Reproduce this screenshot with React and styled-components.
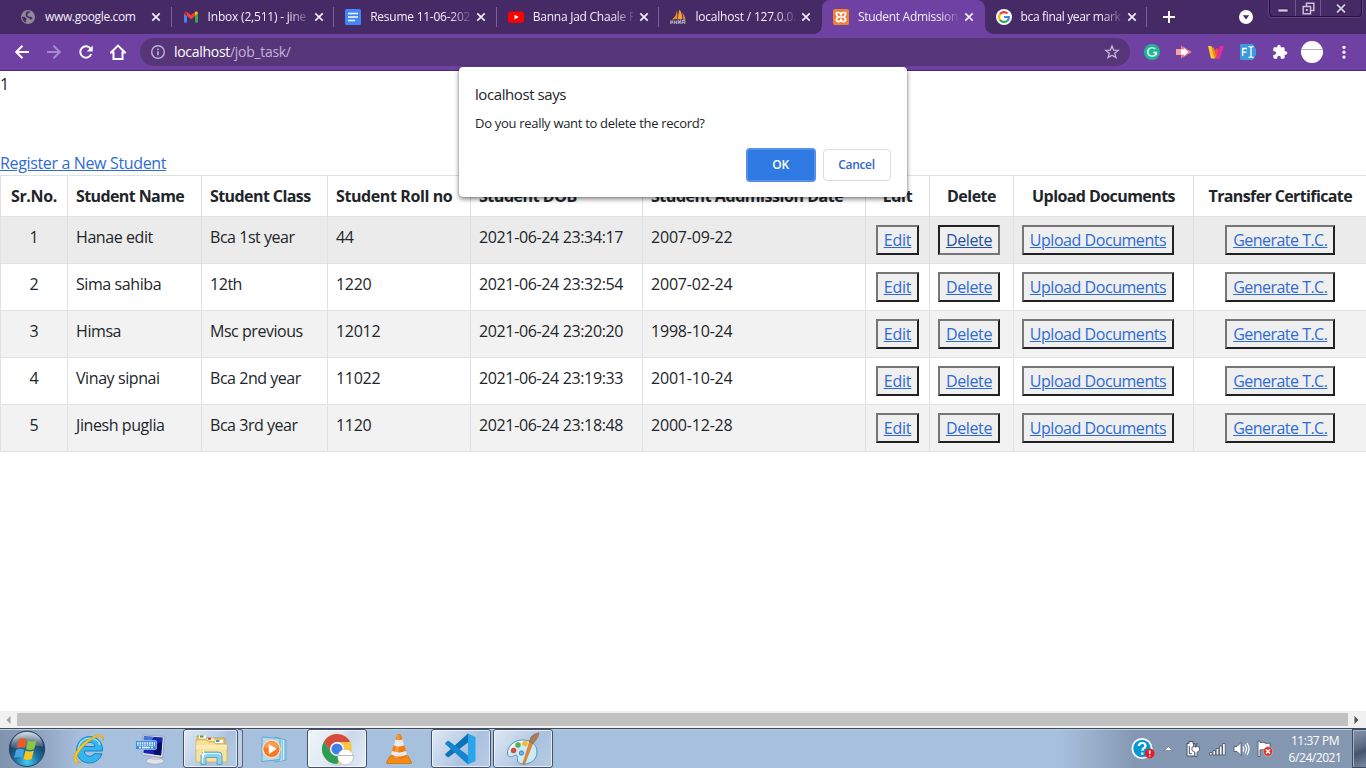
import React from "react";
import styled, { createGlobalStyle, css } from "styled-components";

const Global = createGlobalStyle`
  * { box-sizing: border-box; }
  html, body { margin: 0; padding: 0; overflow: hidden; }
  body { font-family: "Open Sans", "Noto Sans", sans-serif; color: #212529; background: #fff; }
  svg { display: block; flex: none; }
`;

const Screen = styled.div`
  width: 1366px;
  height: 768px;
  position: relative;
  display: flex;
  flex-direction: column;
  overflow: hidden;
`;

/* ---------- browser tabs ---------- */
const TabStrip = styled.header`
  height: 34px;
  flex: none;
  display: flex;
  align-items: stretch;
  padding-left: 9px;
  background: #452a66;
`;
const Tab = styled.div`
  width: 162.6px;
  flex: none;
  display: flex;
  align-items: center;
  padding-left: 11px;
  position: relative;
  color: #f3eff8;
  ${(p) =>
    p.$active
      ? css`
          background: #6e41a2;
          border-radius: 8px 8px 0 0;
          &::before, &::after {
            content: "";
            position: absolute;
            bottom: 0;
            width: 8px;
            height: 8px;
          }
          &::before { left: -8px; background: radial-gradient(circle at 0 0, #452a66 7.5px, #6e41a2 8px); }
          &::after { right: -8px; background: radial-gradient(circle at 100% 0, #452a66 7.5px, #6e41a2 8px); }
        `
      : ""}
`;
const TabTitle = styled.span`
  width: 100px;
  margin-left: 9px;
  font-size: 12px;
  line-height: 20px;
  letter-spacing: ${(p) => p.$ls ?? -0.1}px;
  white-space: nowrap;
  -webkit-mask-image: linear-gradient(90deg, #000 80px, rgba(0, 0, 0, 0.15) 100px);
  mask-image: linear-gradient(90deg, #000 80px, rgba(0, 0, 0, 0.15) 100px);
  ${(p) => p.$whole && "mask-image: none; -webkit-mask-image: none;"}
`;
const TabClose = styled.span`
  margin-left: 6px;
  display: flex;
`;
const TabDivider = styled.i`
  width: 1px;
  height: 20px;
  margin-left: auto;
  background: ${(p) => (p.$hidden ? "transparent" : "#7d5f9d")};
`;
const NewTab = styled.div`
  width: 44px;
  display: flex;
  align-items: center;
  justify-content: center;
`;
const StripEnd = styled.div`
  margin-left: auto;
  display: flex;
  align-items: center;
  gap: 16px;
  padding-right: 4px;
`;
const WindowControls = styled.div`
  align-self: flex-start;
  display: flex;
  height: 17px;
  border: 1px solid #22123a;
  border-top: 0;
  border-radius: 0 0 4px 4px;
  box-shadow: 0 0 0 1px #5c4580;
`;
const WindowButton = styled.div`
  width: ${(p) => p.$w}px;
  display: flex;
  align-items: center;
  justify-content: center;
  & + & { border-left: 1px solid #6d5890; }
`;

/* ---------- browser toolbar ---------- */
const Toolbar = styled.div`
  height: 37px;
  flex: none;
  display: flex;
  align-items: center;
  padding: 0 11px 1px 14px;
  background: #6e41a2;
  border-bottom: 1px solid #4a2c6e;
`;
const NavButtons = styled.div`
  display: flex;
  gap: 16px;
  width: 126px;
`;
const AddressBar = styled.div`
  width: 990px;
  height: 28px;
  flex: none;
  display: flex;
  align-items: center;
  padding: 0 10px;
  border-radius: 14px;
  background: #563679;
  font-size: 14px;
  color: #c3b0da;
`;
const Address = styled.span`
  flex: 1;
  margin-left: 8px;
  line-height: 20px;
  letter-spacing: -0.3px;
  b { font-weight: 400; color: #fff; }
`;
const Extensions = styled.div`
  margin-left: 14px;
  display: flex;
  align-items: center;
  gap: 16px;
`;
const Profile = styled.div`
  width: 22px;
  height: 22px;
  margin: 0 -3px 0 -3px;
  border-radius: 50%;
  background: linear-gradient(#fff 8px, #b9b5be 8px, #b9b5be 9px, #fff 9px);
`;

/* ---------- page ---------- */
const Page = styled.main`
  height: 640px;
  flex: none;
  overflow: hidden;
  font-size: 16px;
  line-height: 24px;
  letter-spacing: -0.35px;
`;
const Output = styled.div`
  height: 80px;
  padding-top: 1px;
`;
const RegisterLink = styled.a`
  display: block;
  height: 24px;
  color: #2e6bd6;
  text-decoration: underline;
`;
const StudentTable = styled.table`
  width: 1366px;
  table-layout: fixed;
  border-collapse: collapse;
`;
const HeadCell = styled.th`
  height: 41px;
  padding: 8px;
  border: 1px solid #dee2e6;
  text-align: ${(p) => (p.$center ? "center" : "left")};
  font-weight: 700;
  white-space: nowrap;
  letter-spacing: ${(p) => p.$ls}px;
  &:last-child { border-right: 0; }
`;
const Row = styled.tr`
  height: 47px;
  background: ${(p) => p.$bg};
`;
const Cell = styled.td`
  padding: 8px;
  border: 1px solid #dee2e6;
  text-align: ${(p) => (p.$center ? "center" : "left")};
  vertical-align: top;
  white-space: nowrap;
  letter-spacing: ${(p) => p.$ls ?? -0.35}px;
  &:last-child { border-right: 0; }
`;
const ActionButton = styled.button`
  display: inline-block;
  vertical-align: top;
  width: ${(p) => p.$w}px;
  height: 30px;
  padding: 0;
  border: 2px solid;
  border-color: ${(p) => (p.$pressed ? "#212121 #767676 #767676 #212121" : "#767676 #212121 #212121 #767676")};
  background: #efefef;
  color: ${(p) => (p.$pressed ? "#1f4fa3" : "#2e6bd6")};
  font: inherit;
  letter-spacing: ${(p) => p.$ls ?? -0.2}px;
  text-decoration: underline;
  white-space: nowrap;
`;

/* ---------- dialog ---------- */
const Dialog = styled.section`
  position: absolute;
  left: 459px;
  top: 67px;
  width: 448px;
  height: 130px;
  padding: 15px 16px 16px;
  display: flex;
  flex-direction: column;
  border-radius: 4px;
  background: #fff;
  box-shadow: 0 0 1px rgba(0, 0, 0, 0.6), 0 2px 5px rgba(0, 0, 0, 0.5);
`;
const DialogTitle = styled.h1`
  margin: 0;
  font-size: 15px;
  line-height: 24px;
  font-weight: 400;
  letter-spacing: -0.42px;
`;
const DialogText = styled.p`
  margin: 7px 0 0;
  font-size: 13px;
  line-height: 20px;
  letter-spacing: -0.3px;
`;
const DialogActions = styled.div`
  margin-top: auto;
  display: flex;
  justify-content: flex-end;
  align-items: center;
  gap: 7px;
  margin-bottom: -1px;
`;
const DialogButton = styled.button`
  width: ${(p) => (p.$primary ? 70 : 68)}px;
  height: ${(p) => (p.$primary ? 34 : 32)}px;
  padding: 0 1px 1px 0;
  border: ${(p) => (p.$primary ? "2px solid #5590ea" : "1px solid #dadce0")};
  border-radius: 4px;
  background: ${(p) => (p.$primary ? "#2f7ae2" : "#fff")};
  color: ${(p) => (p.$primary ? "#fff" : "#3068cb")};
  font: 600 12px "Open Sans", sans-serif;
  letter-spacing: -0.35px;
`;

/* ---------- horizontal scrollbar ---------- */
const ScrollBar = styled.div`
  height: 17px;
  flex: none;
  display: flex;
  align-items: center;
  background: #f1f1f1;
`;
const ScrollArrow = styled.div`
  width: 17px;
  display: flex;
  justify-content: center;
`;
const ScrollThumb = styled.div`
  width: 1331px;
  height: 13px;
  background: #c1c1c1;
`;

/* ---------- taskbar ---------- */
const Taskbar = styled.footer`
  height: 40px;
  flex: none;
  display: flex;
  align-items: stretch;
  border-top: 1px solid #3f4c5f;
  box-shadow: inset 0 1px 0 #bccde2;
  background: linear-gradient(90deg, #7f92ae 0, #8fa4c1 40px, #a7c0de 82px, #a7c0de 1060px, #8598b3 1135px, #8497b1 100%);
`;
const StartSlot = styled.div`
  width: 58px;
  padding: 1px 0 0 8px;
`;
const TaskSlot = styled.div`
  width: 62px;
  padding: 0 1px;
  display: flex;
`;
const TaskButton = styled.div`
  flex: 1;
  display: flex;
  align-items: center;
  justify-content: center;
  ${(p) =>
    p.$open &&
    css`
      border: 1px solid #43526a;
      border-radius: 3px;
      box-shadow: inset 0 0 0 1px rgba(255, 255, 255, 0.65);
      background: ${p.$active
        ? "linear-gradient(115deg, #f1f5fa 0%, #dfe8f3 45%, #c9d8ea 60%, #e6eef6 100%)"
        : "linear-gradient(125deg, #dfe8f4 0%, #bccfe6 45%, #aac1df 60%, #b7cbe4 100%)"};
    `}
`;
const StackEdge = styled.i`
  width: 5px;
  border: 1px solid #56667f;
  border-left: 0;
  border-radius: 0 3px 3px 0;
  background: #bfd0e6;
`;
const Tray = styled.div`
  margin-left: auto;
  display: flex;
  align-items: stretch;
`;
const TrayItem = styled.div`
  width: ${(p) => p.$w}px;
  display: flex;
  align-items: center;
  justify-content: center;
`;
const Clock = styled.div`
  width: 75px;
  padding: 3px 0 0 1px;
  color: #fff;
  font-size: 12px;
  line-height: 17px;
  text-align: center;
  letter-spacing: -0.45px;
  white-space: nowrap;
`;
const ShowDesktop = styled.div`
  width: 14px;
  border: 1px solid #3e4b60;
  border-right: 0;
  box-shadow: inset 1px 1px 0 #a4b2c6;
  background: linear-gradient(160deg, #8594aa 0, #5d6c84 45%, #46556d 60%, #77879f 100%);
`;

/* ---------- icons ---------- */
const Cross = () => (
  <svg width="10" height="10" viewBox="0 0 10 10" stroke="#f3eff8" strokeWidth="1.7"><path d="M1.3 1.3 8.7 8.7M8.7 1.3 1.3 8.7" /></svg>
);
const GlobeIcon = () => (
  <svg width="16" height="16" viewBox="0 0 16 16">
    <circle cx="8" cy="8" r="7" fill="#8f8a95" />
    <path d="M2.200 7.500 4.800 8l2 2-1 1.500.4 2.200C3.500 12.800 2 10.500 2.200 7.500ZM6.500 2.500 10 2.300 9.300 4 7.500 4.800 7.300 6.500l1.800 1.200L11.500 8l1.200 1.500-2.200 1.200L9.300 9.200 6.500 8 5.500 6Z" fill="#452a66" />
  </svg>
);
const GmailIcon = () => (
  <svg width="16" height="16" viewBox="0 0 16 16">
    <path d="M1 13.500h3V7L1 4.500Z" fill="#4285f4" /><path d="M12 13.500h3v-9L12 7Z" fill="#34a853" />
    <path d="M12 7l3-2.400V4c0-1.500-1.700-2-2.700-1.200L12 3Z" fill="#fbbc04" />
    <path d="M1 4.600 4 7V3l-.3-.2C2.700 2 1 2.500 1 4Z" fill="#c5221f" />
    <path d="M4 3 8 6l4-3v4l-4 3.200L4 7Z" fill="#ea4335" />
  </svg>
);
const DocsIcon = () => (
  <svg width="16" height="16" viewBox="0 0 16 16"><rect width="16" height="16" rx="1.600" fill="#4285f4" /><path d="M3 4.500h10M3 8h10M3 11.500h7" stroke="#fff" strokeWidth="1.700" /></svg>
);
const YoutubeIcon = () => (
  <svg width="16" height="16" viewBox="0 0 16 16"><rect y="2.500" width="16" height="11.200" rx="3" fill="#f00" /><path d="m6.500 5.700 4.200 2.400-4.200 2.400Z" fill="#fff" /></svg>
);
const PmaIcon = () => (
  <svg width="16" height="16" viewBox="0 0 16 16">
    <path d="M6.500 1.500c.5 3-.8 6-4.500 9l5-.600c.8-3 .8-6-.5-8.400Z" fill="#f29111" />
    <path d="M9.500.5C8.300 4 8.500 7 7.800 10l4.200.3C12.400 7 11.500 3 9.500.5Z" fill="#f6a033" />
    <path d="M12 3.500c.8 2 1 4.500.7 7l2.800.500C15.300 8 14 5.500 12 3.500Z" fill="#d9853b" />
    <path d="M.7 11.500v3.500M.7 12h2v1.600h-2M4.500 11.500V15m0-1.700h2M6.500 11.500V15M8.300 15v-3.500l1 1.800 1-1.800V15M12.200 15v-3.500h2.600V15m-2.600-1.600h2.600" fill="none" stroke="#aaa7b8" strokeWidth="1.100" />
  </svg>
);
const XamppIcon = () => (
  <svg width="16" height="16" viewBox="0 0 16 16"><rect width="16" height="16" rx="2" fill="#f0813a" /><path d="M3.500 3.500h2A2.500 2.500 0 0 1 8 6a2.500 2.500 0 0 1 2.500-2.500h2V5.800L11 8l1.700 2.300a2.200 2.200 0 0 1-2.200 2.300A2.500 2.500 0 0 1 8 10.200a2.500 2.500 0 0 1-2.500 2.400 2.200 2.200 0 0 1-2.200-2.300L5 8 3.500 5.800ZM5.500 8h5" fill="none" stroke="#fff" strokeWidth="1.700" strokeLinejoin="round" /></svg>
);
const GoogleIcon = () => (
  <svg width="16" height="16" viewBox="0 0 16 16"><circle cx="8" cy="8" r="8" fill="#fff" />
    <g fill="none" strokeWidth="2.200"><path d="M4 5.200A4.900 4.900 0 0 1 11.500 4.600" stroke="#ea4335" /><path d="M4 5.200a4.900 4.900 0 0 0 0 5.600" stroke="#fbbc05" /><path d="M4 10.800a4.900 4.900 0 0 0 7.200 1" stroke="#34a853" /><path d="M8 8h4.900a4.900 4.900 0 0 1-1.700 3.800" stroke="#4285f4" /></g>
  </svg>
);
const Nav = ({ children, dim }) => (
  <svg width="16" height="16" viewBox="0 0 16 16" fill="none" stroke={dim ? "#a689c8" : "#fff"} strokeWidth="2">{children}</svg>
);
const InfoIcon = () => (
  <svg width="16" height="16" viewBox="0 0 16 16" fill="none" stroke="#c3b0da" strokeWidth="1.400"><circle cx="8" cy="8" r="6.300" /><path d="M8 7.200v4M8 4.500v1.600" strokeWidth="1.600" /></svg>
);
const StarIcon = () => (
  <svg width="16" height="16" viewBox="0 0 16 16" fill="none" stroke="#c8b8dc" strokeWidth="1.300"><path d="m8 1.900 1.700 4.200 4.500.3-3.500 2.900 1.200 4.400L8 11.300l-3.900 2.400 1.200-4.400-3.500-2.900 4.500-.3Z" /></svg>
);
const GrammarlyIcon = () => (
  <svg width="16" height="16" viewBox="0 0 16 16"><circle cx="8" cy="8" r="8" fill="#1cb992" /><path d="M11.200 5A4.300 4.300 0 1 0 12.300 8.500H9.300M12.300 8.300v2.900" fill="none" stroke="#fff" strokeWidth="1.400" /></svg>
);
const ArrowExtIcon = () => (
  <svg width="16" height="16" viewBox="0 0 16 16"><path d="M5 1.500 16 8 5 14.500Z" fill="#f07986" /><path d="M0 5h5v6H0Z" fill="#f6a3a7" /><path d="M5 5.200h3V4l4.500 4L8 12v-1.200H5Z" fill="#fff" /></svg>
);
const WIcon = () => (
  <svg width="16" height="16" viewBox="0 0 16 16"><path d="M0 2h3.500l3.800 12.500H3Z" fill="#ffc928" /><path d="M3.500 3.500h2.300l2.500 8-1 3-1.500-2Z" fill="#f08a1c" /><path d="m6.500 6.500 2.600-2.700 2.400 7-.8 3.700H8.500Z" fill="#f0533a" /><path d="M11.500 2H16l-4 12.500H8.300Z" fill="#df2c9e" /></svg>
);
const FontExtIcon = () => (
  <svg width="16" height="16" viewBox="0 0 16 16"><path d="M1 0h12l3 5v6l-3 5H1a1 1 0 0 1-1-1V1a1 1 0 0 1 1-1Z" fill="#3d9bdc" /><path d="M2.700 12v-7.500H7M2.700 8.200h3.800M8.500 2.700h1.300l1.200.8 1.200-.8h1.300M11 3.500v9M8.500 13.300h1.300l1.200-.8 1.200.8h1.300" fill="none" stroke="#fff" strokeWidth="1.300" /></svg>
);
const PuzzleIcon = () => (
  <svg width="16" height="16" viewBox="0 0 24 24"><path fill="#fff" d="M20.500 11H19V7a2 2 0 0 0-2-2h-4V3.500a2.500 2.500 0 0 0-5 0V5H4a2 2 0 0 0-2 2v3.800h1.500a2.700 2.700 0 0 1 0 5.400H2V20a2 2 0 0 0 2 2h3.800v-1.500a2.700 2.700 0 0 1 5.400 0V22H17a2 2 0 0 0 2-2v-4h1.500a2.500 2.500 0 0 0 0-5Z" /></svg>
);
const MenuIcon = () => (
  <svg width="16" height="16" viewBox="0 0 16 16" fill="#fff"><circle cx="8" cy="3.300" r="1.600" /><circle cx="8" cy="8.200" r="1.600" /><circle cx="8" cy="13.100" r="1.600" /></svg>
);
const WindowsOrb = () => (
  <svg width="38" height="38" viewBox="0 0 38 38">
    <defs>
      <radialGradient id="orb" cx="50%" cy="88%" r="85%"><stop offset="0" stopColor="#3fd0ef" /><stop offset=".4" stopColor="#1b6f9f" /><stop offset=".75" stopColor="#1b3d63" /><stop offset="1" stopColor="#6c87a4" /></radialGradient>
      <linearGradient id="gloss" x2="0" y2="1"><stop stopColor="#fff" stopOpacity=".7" /><stop offset="1" stopColor="#fff" stopOpacity=".12" /></linearGradient>
    </defs>
    <circle cx="19" cy="18.800" r="17.700" fill="url(#orb)" stroke="#2c4663" strokeWidth="1" />
    <path d="M3 17C4 -3 34 -3 35 17 25 13 14 21 3 17Z" fill="url(#gloss)" />
    <path d="M10.800 9.500c2.500-1.600 5.200-1.600 8 .1l-2.200 8.700c-2.600-1.600-5.200-1.500-8-.1Z" fill="#ee5a24" />
    <path d="M20.200 10.500c2.600 1.500 5.500 1.200 8.400-.2l-2.300 8.600c-2.900 1.500-5.700 1.500-8.300.1Z" fill="#8cc63f" />
    <path d="M8.200 19.700c2.800-1.400 5.400-1.400 8 .1l-2.100 8.300c-2.700-1.600-5.300-1.400-8.100 0Z" fill="#4aa3df" />
    <path d="M17.600 20.500c2.600 1.500 5.400 1.400 8.300 0l-2.300 8.500c-2.900 1.400-5.700 1.400-8.200-.1Z" fill="#fcc51e" />
  </svg>
);
const IeIcon = () => (
  <svg width="34" height="34" viewBox="0 0 34 34">
    <path d="M30.500 19H12.200c.3 3.300 2.500 5.300 5.300 5.300 2 0 3.500-.9 4.500-2.500h8C28.200 27.200 23.500 31 17.500 31 9.800 31 4.600 25.500 4.600 18S10 4.600 17.500 4.600 31 10 30.500 19ZM12.300 14.500h10.800c-.5-2.500-2.600-4.200-5.400-4.200s-4.800 1.700-5.400 4.200Z" fill="#35b5ee" stroke="#1583c3" strokeWidth="1" />
    <path d="M6 17C7 10 12 6.200 17.500 6.200c5 0 9 2.500 10.700 6.800" fill="none" stroke="#a3e3fb" strokeWidth="1.200" />
    <path d="M31 9c2-6-2.500-8.500-11-3.800C9 11 .5 21.500 2 28.500c.8 3 4 3 7.500 1.300-3.500.8-5.200-.4-5-3.300C5 20 14 10.300 22 6.300c5.500-3 9.500-2.500 9 2.700Z" fill="#fbc926" stroke="#d79b0c" strokeWidth=".6" />
  </svg>
);
const DisplayIcon = () => (
  <svg width="34" height="34" viewBox="0 0 34 34">
    <ellipse cx="21" cy="29" rx="9" ry="3.200" fill="#dfe3e9" stroke="#9aa4b3" strokeWidth=".7" /><path d="M17 22h8l1 6h-8Z" fill="#c4cad4" />
    <path d="m8.500 3 22 1.300-1.800 21.500-20.700-3Z" fill="#dce1e8" stroke="#8793a6" strokeWidth=".7" />
    <path d="m9.800 4.300 19 1.100-1.700 18-17.600-2.300Z" fill="#1722b0" /><path d="m10 4.300 10 .6-5 7H9.600Z" fill="#4a72d9" /><path d="m20 13 8-3-1 13.200-7-.8Z" fill="#070b63" />
    <rect x="1.500" y="8.500" width="21" height="9" rx="1" fill="#3e8ede" stroke="#a5d0f5" strokeWidth=".7" />
    <path d="M3 11h18M3 13.200h18" stroke="#fff" strokeWidth="1.300" strokeDasharray="1.600 .8" /><path d="M5 15.500h2m1 0h8m1 0h2" stroke="#fff" strokeWidth="1.300" />
  </svg>
);
const ExplorerIcon = () => (
  <svg width="34" height="34" viewBox="0 0 34 34">
    <path d="M3 4h8l1 2h19v23H3Z" fill="#e9c867" stroke="#b99743" strokeWidth=".7" /><path d="M5 3.500h7v3H5Z" fill="#fff" /><path d="M6 3.500h3.500v2H6Z" fill="#2daf3a" /><path d="M13 6.500h7v2h-7Z" fill="#fff" /><path d="M14 5.800h3v2h-3Z" fill="#d34a2a" /><path d="M21 8h8v3h-8Z" fill="#fff" /><path d="M22 8h3.500v2H22Z" fill="#3b9ddb" />
    <path d="M2 8h11l1.500 2H20l1.500 2H33v18H2Z" fill="#f8e29a" stroke="#cdac54" strokeWidth=".7" />
    <path d="M2 13h31v4H2Z" fill="#fcefbd" opacity=".7" />
    <path d="M7 32.500V23.500q0-3.500 3.500-3.500h14q3.500 0 3.500 3.500v9h-5v-7h-11v7Z" fill="#8fd0ee" stroke="#4a9cc6" strokeWidth=".8" /><path d="M8.500 31v-7.500q0-2 2-2h14q2 0 2 2" fill="none" stroke="#dff4fd" strokeWidth="1.200" />
    <path d="M9.500 18.500v7M6 22h7" stroke="#fff" strokeWidth="1" />
  </svg>
);
const MediaIcon = () => (
  <svg width="34" height="34" viewBox="0 0 34 34">
    <path d="m17 5 11 3v20l-11 2Z" fill="#8cc8e8" stroke="#5ba6cf" strokeWidth=".7" /><path d="M23 7v22M25.500 8v20" stroke="#e1f3fb" strokeWidth=".9" />
    <path d="m4 5 18 1.500v21L4 29.500Z" fill="#b5d8ec" stroke="#64a9cf" strokeWidth="1" />
    <circle cx="13.500" cy="17" r="8.600" fill="#f27b21" stroke="#fbe0c5" strokeWidth="1.200" /><path d="M6 15a8 8 0 0 1 15 0c-5 2-10 2-15 0Z" fill="#ffae66" opacity=".7" /><path d="m10.800 12.300 8 4.700-8 4.900Z" fill="#fff" />
  </svg>
);
const ChromeIcon = () => (
  <svg width="34" height="34" viewBox="0 0 34 34">
    <circle cx="17" cy="17" r="15" fill="#f7c844" />
    <path d="M4 9.500a15 15 0 0 1 26 0V10H17L11 20.500Z" fill="#d64a3f" />
    <path d="M4 9.500A15 15 0 0 0 17 32l6-11.500H11Z" fill="#2c9d57" />
    <circle cx="17" cy="17" r="7" fill="#fff" /><circle cx="17" cy="17" r="5.600" fill="#3f7fe8" />
    <circle cx="25.500" cy="25" r="7.800" fill="#fff" stroke="#b4b4b8" strokeWidth=".6" /><path d="M18 23.500h15" stroke="#aaa" strokeWidth=".8" />
  </svg>
);
const VlcIcon = () => (
  <svg width="34" height="34" viewBox="0 0 34 34">
    <path d="m8 24-3.500 6.500q-.3 1 .7 1h23.600q1 0 .7-1L26 24Z" fill="#f48b12" stroke="#c4680a" strokeWidth=".7" />
    <path d="M15 2.500q2-1.500 4 0L25.500 25q-8.500 4.500-17 0Z" fill="#e9e9e9" />
    <path d="M15 2.500q2-1.500 4 0l1.500 4.700q-3.500 1.700-7 0ZM11.600 13.200q5.400 2.500 10.800 0l1.700 5.600q-7.100 3.500-14.200 0ZM9 22.500q8 4 16 0l.7 2.700q-8.700 4.500-17.400 0Z" fill="#ef7d11" />
    <path d="M15.500 3h2l-1.500 23.500-4-.5Z" fill="#fff" opacity=".25" />
  </svg>
);
const VsCodeIcon = () => (
  <svg width="34" height="34" viewBox="0 0 34 34">
    <path d="M24 1.500 1.500 21.800q-.6.700 0 1.400l2 1.800q.7.500 1.500 0L24 10.500Z" fill="#0d72ba" /><path d="M24 32.500 1.500 12.200q-.6-.7 0-1.400l2-1.800q.7-.5 1.500 0L24 23.500Z" fill="#1485cf" /><path d="M24 1.500v31l7.500-3.500V5Z" fill="#2aa5ec" />
  </svg>
);
const PaintIcon = () => (
  <svg width="34" height="34" viewBox="0 0 34 34">
    <path d="M18 8C8 7 .5 15 1.500 22c.7 4 4.500 3 6.500 1.700 2.500-1.500 4 0 3.500 3-.5 3.500 2 5.300 6 5.300 8 0 13.500-5 13.500-12S26 8.600 18 8Z" fill="#cfe9f5" stroke="#5599bd" strokeWidth="1" /><path d="M4 20C5 13 11 9.500 17 9.500" fill="none" stroke="#fff" strokeWidth="1.400" />
    <circle cx="7.500" cy="18.500" r="2.800" fill="#d94a3a" /><circle cx="12" cy="13" r="2.700" fill="#54b04a" /><circle cx="19" cy="11.500" r="2.700" fill="#f1bd2c" /><circle cx="15.500" cy="21" r="2.200" fill="#6cb4e2" stroke="#327eaf" strokeWidth=".8" />
    <path d="M27.500 9.500 19 31q-2 3.500-2.300 1L24 8.500Z" fill="#e8892c" stroke="#b46017" strokeWidth=".5" /><path d="m23.500 9.500 1.500-4.500q3-3.500 8-4-1 5-3.500 7.500l-2.500 3Z" fill="#ad7c56" stroke="#7f5333" strokeWidth=".5" />
  </svg>
);
const HelpTrayIcon = () => (
  <svg width="24" height="24" viewBox="0 0 24 24"><circle cx="11" cy="11.500" r="10.500" fill="#fff" /><circle cx="11" cy="11.500" r="8.700" fill="#0798d4" /><path d="M7.800 9q.3-3 3.500-3 3 0 3.200 2.500 0 1.600-1.700 2.700-1.500 1-1.500 2.600M11.300 15.500v2.300" fill="none" stroke="#fff" strokeWidth="2.200" /><circle cx="18.700" cy="16.500" r="4.800" fill="#e51c23" /><path d="M18.700 13.500v3.600M18.700 18.200v1.300" stroke="#fff" strokeWidth="1.600" /></svg>
);
const PowerIcon = () => (
  <svg width="16" height="18" viewBox="0 0 16 18"><path d="M2 3.500h2v-2h4v2h2V16H2Z" fill="#fff" stroke="#434f60" strokeWidth="1" /><path d="M4.300 6v7.700h2.500" fill="none" stroke="#434f60" /><path d="M7 7h1.500V3.500h1.300V7h1.700V3.500h1.300V7h1.700v3.500L12 12.300V16.500h-2v-4.200L7 10.500Z" fill="#fff" stroke="#434f60" strokeWidth=".8" /></svg>
);
const SignalIcon = () => (
  <svg width="17" height="16" viewBox="0 0 17 16"><g fill="#fff" stroke="#434f60" strokeWidth=".8"><path d="M.5 11.500h2.700v2.500H.5ZM4 9.500h2.600V14H4ZM7.200 7.500h2.600V14H7.200ZM10.400 5H13v9h-2.600ZM13.600 2.500h2.600V14h-2.600Z" /></g></svg>
);
const SoundIcon = () => (
  <svg width="17" height="16" viewBox="0 0 17 16"><path d="M1 5.500h3L8 1.500v13L4 10.500H1Z" fill="#fff" stroke="#434f60" strokeWidth=".8" /><path d="M10 5.500q1.700 2.500 0 5M12 3.500q3 4.500 0 9M14 2q4 6 0 12" fill="none" stroke="#fff" strokeWidth="1.200" /></svg>
);
const FlagIcon = () => (
  <svg width="18" height="17" viewBox="0 0 18 17"><path d="M2 1v15.500h2V10q3-1 5 0t5-.3V3q-3 1-5 0T4 2.500V1Z" fill="#fff" stroke="#434f60" strokeWidth=".8" /><circle cx="12" cy="11.500" r="4.700" fill="#d8342c" stroke="#f6b2ac" strokeWidth=".6" /><path d="m10 9.500 4 4m0-4-4 4" stroke="#fff" strokeWidth="1.600" /></svg>
);

/* ---------- data ---------- */
const tabs = [
  { icon: <GlobeIcon />, title: "www.google.com", ls: -0.35, whole: true },
  { icon: <GmailIcon />, title: "Inbox (2,511) - jine", ls: -0.2 },
  { icon: <DocsIcon />, title: "Resume 11-06-202", ls: -0.25 },
  { icon: <YoutubeIcon />, title: "Banna Jad Chaale F", ls: -0.25 },
  { icon: <PmaIcon />, title: "localhost / 127.0.0.", ls: -0.2 },
  { icon: <XamppIcon />, title: "Student Admission", active: true, ls: -0.3 },
  { icon: <GoogleIcon />, title: "bca final year mark", ls: -0.35 },
];
const columns = [
  ["Sr.No.", 67, -0.35, true], ["Student Name", 134, -0.6], ["Student Class", 126, -0.58], ["Student Roll no", 143, -0.4],
  ["Student DOB", 172, -0.45], ["Student Addmission Date", 223, -0.45], ["Edit", 64, -0.35, true], ["Delete", 84, -0.5, true],
  ["Upload Documents", 180, -0.57, true], ["Transfer Certificate", 173, -0.62, true],
];
const cellSpacing = [-0.42, -0.46, -0.3, -0.36, -0.2];
const students = [
  ["Hanae edit", "Bca 1st year", "44", "2021-06-24 23:34:17", "2007-09-22"],
  ["Sima sahiba", "12th", "1220", "2021-06-24 23:32:54", "2007-02-24"],
  ["Himsa", "Msc previous", "12012", "2021-06-24 23:20:20", "1998-10-24"],
  ["Vinay sipnai", "Bca 2nd year", "11022", "2021-06-24 23:19:33", "2001-10-24"],
  ["Jinesh puglia", "Bca 3rd year", "1120", "2021-06-24 23:18:48", "2000-12-28"],
];
const tasks = [
  { icon: <IeIcon /> }, { icon: <DisplayIcon /> }, { icon: <ExplorerIcon />, open: true, stacked: true },
  { icon: <MediaIcon /> }, { icon: <ChromeIcon />, open: true, active: true }, { icon: <VlcIcon /> },
  { icon: <VsCodeIcon />, open: true }, { icon: <PaintIcon />, open: true },
];
const rowColor = (i) => (i === 0 ? "#ebebeb" : i % 2 ? "#fff" : "#f2f2f2");

export default function App() {
  return (
    <Screen>
      <Global />
      <TabStrip>
        {tabs.map((t, i) => (
          <Tab key={t.title} $active={t.active}>
            {t.icon}
            <TabTitle $ls={t.ls} $whole={t.whole}>{t.title}</TabTitle>
            <TabClose><Cross /></TabClose>
            <TabDivider $hidden={i === 4 || i === 5} />
          </Tab>
        ))}
        <NewTab>
          <svg width="14" height="14" viewBox="0 0 14 14" stroke="#fff" strokeWidth="2"><path d="M7 1v12M1 7h12" /></svg>
        </NewTab>
        <StripEnd>
          <svg width="14" height="14" viewBox="0 0 14 14"><circle cx="7" cy="7" r="7" fill="#fff" /><path d="M3.800 5.200h6.400L7 9.500Z" fill="#452a66" /></svg>
          <WindowControls>
            <WindowButton $w={25}><svg width="12" height="10" viewBox="0 0 12 10"><path d="M1 6h10v3H1Z" fill="#d5cbe0" stroke="#2a1a42" strokeWidth=".7" /></svg></WindowButton>
            <WindowButton $w={25}><svg width="13" height="13" viewBox="0 0 13 13"><path d="M4.500 1.200h7.300v7.300H4.500Z" fill="none" stroke="#cbbfda" strokeWidth="1.500" /><path d="M1.200 4.500h7.300v7.300H1.200Z" fill="#452a66" stroke="#cbbfda" strokeWidth="1.500" /><path d="M3.800 7h2v2h-2Z" fill="#cbbfda" /></svg></WindowButton>
            <WindowButton $w={41}><svg width="12" height="11" viewBox="0 0 12 11"><path d="m2 1.500 8 8m0-8-8 8" stroke="#21123a" strokeWidth="3.500" /><path d="m2 1.500 8 8m0-8-8 8" stroke="#d0c5dd" strokeWidth="2" /></svg></WindowButton>
          </WindowControls>
        </StripEnd>
      </TabStrip>
      <Toolbar>
        <NavButtons>
          <Nav><path d="M15 8H2.500M8.500 1.700 2.200 8l6.300 6.300" /></Nav>
          <Nav dim><path d="M1 8h12.500M7.500 1.700 13.800 8l-6.300 6.300" /></Nav>
          <Nav><path d="M13.200 10.200A5.700 5.700 0 1 1 12.500 4.500" /><path d="M14.700 1.500v6H8.700Z" fill="#fff" stroke="none" /></Nav>
          <Nav><path d="M1 8.500h2.500v6.500h9V8.500H15L8 1.600Z" /></Nav>
        </NavButtons>
        <AddressBar>
          <InfoIcon />
          <Address><b>localhost</b>/job_task/</Address>
          <StarIcon />
        </AddressBar>
        <Extensions>
          <GrammarlyIcon /><ArrowExtIcon /><WIcon /><FontExtIcon /><PuzzleIcon /><Profile /><MenuIcon />
        </Extensions>
      </Toolbar>
      <Page>
        <Output>1</Output>
        <RegisterLink>Register a New Student</RegisterLink>
        <StudentTable>
          <colgroup>{columns.map(([name, w]) => <col key={name} width={w} />)}</colgroup>
          <thead>
            <tr>{columns.map(([name, , ls, center]) => <HeadCell key={name} $ls={ls} $center={center}>{name}</HeadCell>)}</tr>
          </thead>
          <tbody>
            {students.map((s, i) => (
              <Row key={s[0]} $bg={rowColor(i)}>
                <Cell $center>{i + 1}</Cell>
                {s.map((v, c) => <Cell key={c} $ls={cellSpacing[c]}>{v}</Cell>)}
                <Cell $center><ActionButton $w={43}>Edit</ActionButton></Cell>
                <Cell><ActionButton $w={62} $ls={-0.35} $pressed={i === 0}>Delete</ActionButton></Cell>
                <Cell><ActionButton $w={152} $ls={-0.45}>Upload Documents</ActionButton></Cell>
                <Cell $center><ActionButton $w={110} $ls={-0.52}>Generate T.C.</ActionButton></Cell>
              </Row>
            ))}
          </tbody>
        </StudentTable>
      </Page>
      <ScrollBar>
        <ScrollArrow><svg width="5" height="8" viewBox="0 0 5 8"><path d="M4.500 0v8L.5 4Z" fill="#a3a3a3" /></svg></ScrollArrow>
        <ScrollThumb />
        <ScrollArrow><svg width="5" height="8" viewBox="0 0 5 8"><path d="M.5 0v8l4-4Z" fill="#505050" /></svg></ScrollArrow>
      </ScrollBar>
      <Taskbar>
        <StartSlot><WindowsOrb /></StartSlot>
        {tasks.map((t, i) => (
          <TaskSlot key={i}>
            <TaskButton $open={t.open} $active={t.active}>{t.icon}</TaskButton>
            {t.stacked && <StackEdge />}
          </TaskSlot>
        ))}
        <Tray>
          <TrayItem $w={25}><HelpTrayIcon /></TrayItem>
          <TrayItem $w={27}><svg width="9" height="5" viewBox="0 0 9 5"><path d="M.5 4.500h8l-4-4Z" fill="#fff" stroke="#4f5d71" strokeWidth=".5" /></svg></TrayItem>
          <TrayItem $w={22}><PowerIcon /></TrayItem>
          <TrayItem $w={26}><SignalIcon /></TrayItem>
          <TrayItem $w={23}><SoundIcon /></TrayItem>
          <TrayItem $w={24}><FlagIcon /></TrayItem>
          <Clock>11:37 PM<br />6/24/2021</Clock>
          <ShowDesktop />
        </Tray>
      </Taskbar>
      <Dialog role="dialog">
        <DialogTitle>localhost says</DialogTitle>
        <DialogText>Do you really want to delete the record?</DialogText>
        <DialogActions>
          <DialogButton $primary>OK</DialogButton>
          <DialogButton>Cancel</DialogButton>
        </DialogActions>
      </Dialog>
    </Screen>
  );
}
